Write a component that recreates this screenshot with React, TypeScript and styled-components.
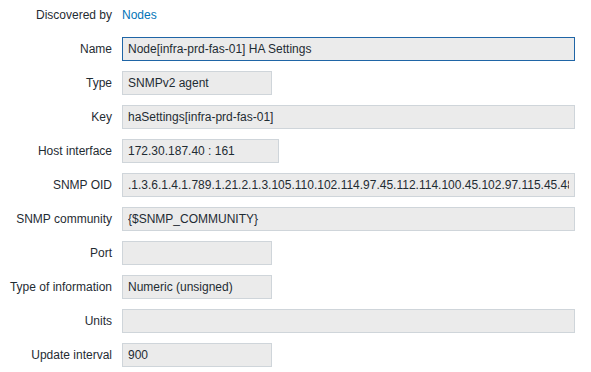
import styled, { createGlobalStyle } from "styled-components";

const GlobalStyle = createGlobalStyle`
  html, body {
    margin: 0;
    padding: 0;
    background: #ffffff;
  }
  body {
    font-family: "Liberation Sans", Arial, sans-serif;
    font-size: 12px;
    color: #1f2c33;
  }
`;

type Width = "wide" | "short" | "medium";

interface Row {
  label: string;
  value: string;
  width: Width;
  focused?: boolean;
}

const rows: Row[] = [
  { label: "Name", value: "Node[infra-prd-fas-01] HA Settings", width: "wide", focused: true },
  { label: "Type", value: "SNMPv2 agent", width: "short" },
  { label: "Key", value: "haSettings[infra-prd-fas-01]", width: "wide" },
  { label: "Host interface", value: "172.30.187.40 : 161", width: "medium" },
  {
    label: "SNMP OID",
    value:
      ".1.3.6.1.4.1.789.1.21.2.1.3.105.110.102.114.97.45.112.114.100.45.102.97.115.45.48.49",
    width: "wide",
  },
  { label: "SNMP community", value: "{$SNMP_COMMUNITY}", width: "wide" },
  { label: "Port", value: "", width: "short" },
  { label: "Type of information", value: "Numeric (unsigned)", width: "short" },
  { label: "Units", value: "", width: "wide" },
  { label: "Update interval", value: "900", width: "short" },
];

const widths: Record<Width, string> = {
  wide: "453px",
  short: "150px",
  medium: "157px",
};

function App() {
  return (
    <>
      <GlobalStyle />
      <Form>
        <Label>Discovered by</Label>
        <Cell>
          <Link href="#">Nodes</Link>
        </Cell>
        {rows.map((row) => (
          <FormRow key={row.label} row={row} />
        ))}
      </Form>
    </>
  );
}

function FormRow({ row }: { row: Row }) {
  return (
    <>
      <Label>{row.label}</Label>
      <Cell>
        <Field
          readOnly
          value={row.value}
          $width={widths[row.width]}
          $focused={row.focused}
        />
      </Cell>
    </>
  );
}

export default App;

const Form = styled.div`
  display: grid;
  grid-template-columns: 112px 1fr;
  grid-auto-rows: 24px;
  column-gap: 10px;
  row-gap: 10px;
  padding-top: 3px;
`;

const Label = styled.div`
  display: flex;
  align-items: center;
  justify-content: flex-end;
  white-space: nowrap;
  color: #1f2c33;
`;

const Cell = styled.div`
  display: flex;
  align-items: center;
`;

const Link = styled.a`
  color: #0275b8;
  text-decoration: none;
`;

const Field = styled.input<{ $width: string; $focused?: boolean }>`
  box-sizing: border-box;
  width: ${(p) => p.$width};
  height: 24px;
  margin: 0;
  padding: 0 5px;
  border: 1px solid ${(p) => (p.$focused ? "#1f65a6" : "#cfd5da")};
  background: #ebebeb;
  color: #1f2c33;
  font-family: "Liberation Sans", Arial, sans-serif;
  font-size: 12px;
  outline: none;
  border-radius: 0;
`;
